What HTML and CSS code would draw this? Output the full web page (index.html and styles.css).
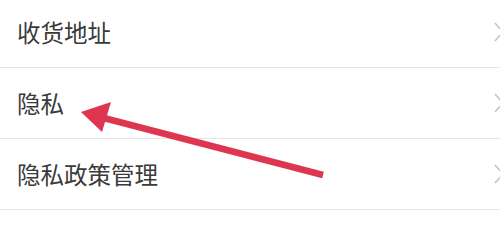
FILE: index.html
```html
<!DOCTYPE html>
<html lang="zh-CN">
  <head>
    <meta charset="UTF-8" />
    <meta name="viewport" content="width=device-width, initial-scale=1.0" />
    <title>设置</title>
    <link rel="stylesheet" href="styles.css">
  </head>
  <body>
    <div class="page">
      <!-- 设置列表 -->
      <ul class="menu-list">
        <li class="menu-item">
          <span class="menu-label">收货地址</span>
          <svg class="chevron" viewBox="0 0 10 20" width="10" height="20"><polyline points="1,1 9,10 1,19" /></svg>
        </li>
        <li class="menu-item">
          <span class="menu-label">隐私</span>
          <svg class="chevron" viewBox="0 0 10 20" width="10" height="20"><polyline points="1,1 9,10 1,19" /></svg>
        </li>
        <li class="menu-item">
          <span class="menu-label">隐私政策管理</span>
          <svg class="chevron" viewBox="0 0 10 20" width="10" height="20"><polyline points="1,1 9,10 1,19" /></svg>
        </li>
        <li class="menu-item"></li>
      </ul>
      <!-- 标注箭头 -->
      <svg class="annotation" viewBox="0 0 500 234" width="500" height="234">
        <line x1="323" y1="175" x2="100" y2="117" />
        <polygon points="81,112 111,102 102,132" />
      </svg>
    </div>
  </body>
</html>
```

FILE: styles.css
```css
/* ベース */
body {
  margin: 0;
  background-color: #fff;
  font-family: "Noto Sans CJK SC", "Noto Sans", sans-serif;
  overflow: hidden;
}
.page {
  position: relative;
  width: 500px;
  height: 234px;
  overflow: hidden;
}
/* リスト */
.menu-list {
  list-style: none;
  margin: -3px 0 0 0;
  padding: 0;
}
.menu-item {
  display: flex;
  align-items: center;
  justify-content: space-between;
  height: 70px;
  padding-left: 17px;
  border-bottom: 1px solid #e6e6e6;
}
.menu-label {
  font-size: 23.5px;
  color: #3a3a3a;
}
.chevron {
  margin-right: -4px;
  fill: none;
  stroke: #c4c4c4;
  stroke-width: 1.6;
}
/* 矢印 */
.annotation {
  position: absolute;
  left: 0;
  top: 0;
}
.annotation line {
  stroke: #de3650;
  stroke-width: 6.5;
}
.annotation polygon {
  fill: #de3650;
}
```
